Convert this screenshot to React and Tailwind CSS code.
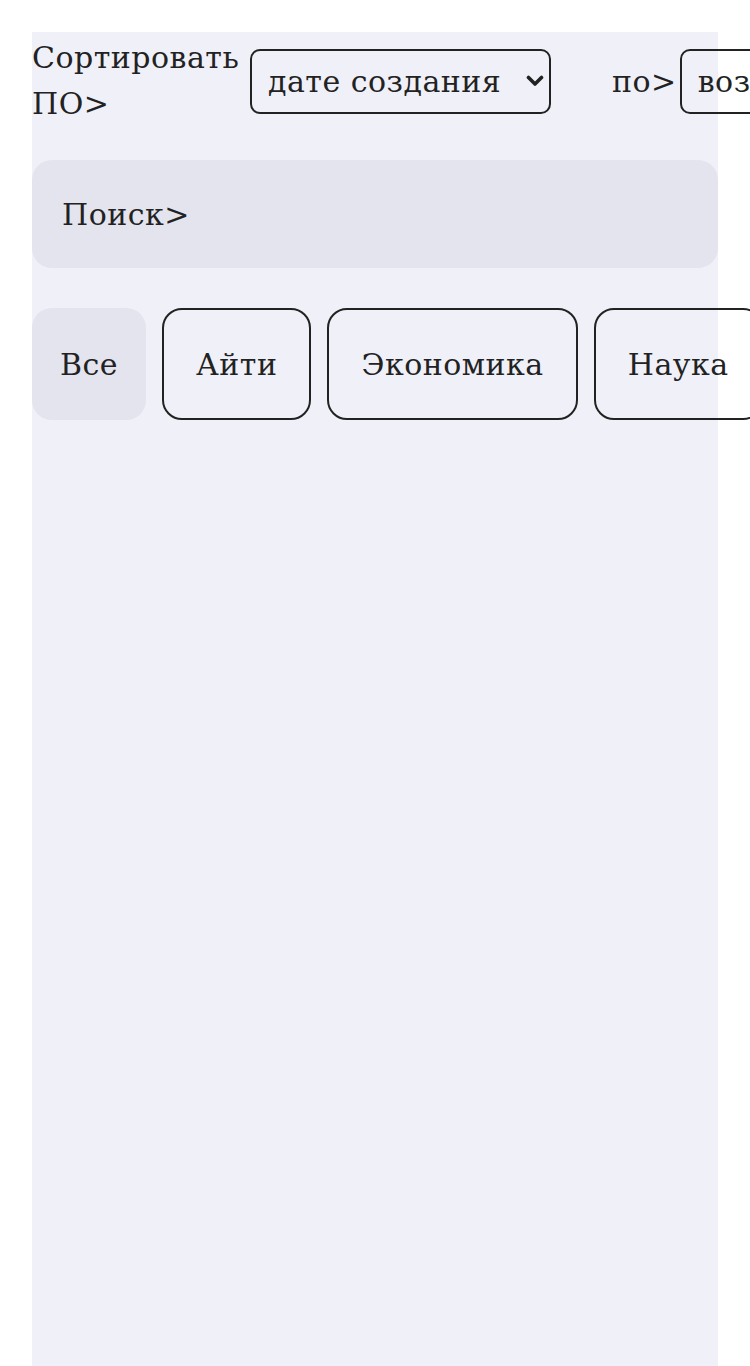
import React from "react";

const font = { fontFamily: '"DejaVu Serif", "Liberation Serif", serif', letterSpacing: "0.5px" };

function Select({ value, width, children }) {
  return (
    <div className={`relative shrink-0 ${width}`}>
      <select
        defaultValue={value}
        className="w-full h-[65px] appearance-none rounded-[10px] border-2 border-[#222] bg-transparent pl-[16px] pr-[40px] text-[30px] text-[#222] outline-none"
        style={font}
      >
        {children}
      </select>
      <svg
        className="pointer-events-none absolute right-[7px] top-1/2 -translate-y-1/2"
        width="18"
        height="12"
        viewBox="0 0 18 12"
      >
        <path d="M2.5 2.5 L9 9 L15.5 2.5" fill="none" stroke="#222" strokeWidth="3.6" strokeLinecap="round" strokeLinejoin="round" />
      </svg>
    </div>
  );
}

export default function App() {
  const cats = ["Айти", "Экономика", "Наука"];
  return (
    <div className="min-h-screen w-[750px] overflow-hidden bg-white text-[#222]" style={font}>
      <div className="mx-8 mt-8 min-h-[1334px] bg-[#eff0f8]">
        <div className="flex items-center pt-[3px] whitespace-nowrap">
          <div className="w-[212px] shrink-0 whitespace-normal text-[30px] leading-[46px]">
            Сортировать ПО&gt;
          </div>
          <div className="ml-[6px]">
            <Select value="created" width="w-[301px]">
              <option value="created">дате создания</option>
              <option value="updated">дате изменения</option>
            </Select>
          </div>
          <div className="ml-[61px] shrink-0 text-[30px]">по&gt;</div>
          <div className="ml-[3px]">
            <Select value="asc" width="w-[300px]">
              <option value="asc">возрастанию</option>
              <option value="desc">убыванию</option>
            </Select>
          </div>
        </div>

        <div className="mt-[33px] flex h-[108px] items-center rounded-[20px] bg-[#e4e4ee] px-[30px]">
          <input
            type="text"
            placeholder="Поиск>"
            className="w-full bg-transparent text-[30px] text-[#222] outline-none placeholder:text-[#222]"
            style={font}
          />
        </div>

        <div className="mt-[40px] flex gap-[16px] whitespace-nowrap">
          <button
            className="h-[112px] shrink-0 rounded-[20px] bg-[#e4e4ee] px-[28px] text-[30px] text-[#222]"
            style={font}
          >
            Все
          </button>
          {cats.map((c) => (
            <button
              key={c}
              className="h-[112px] shrink-0 rounded-[20px] border-2 border-[#222] bg-transparent px-[32px] text-[30px] text-[#222]"
              style={font}
            >
              {c}
            </button>
          ))}
        </div>
      </div>
    </div>
  );
}
